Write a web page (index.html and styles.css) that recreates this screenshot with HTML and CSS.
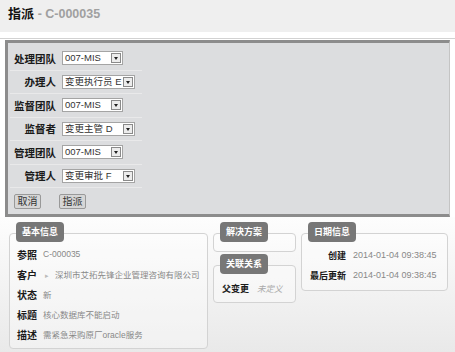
FILE: index.html
```html
<!DOCTYPE html>
<html lang="zh-CN">
<head>
    <meta charset="UTF-8">
    <title>指派 - C-000035</title>
    <link rel="stylesheet" href="styles.css">
</head>
<body>
    <div class="title-bar">
        <h1>指派 <span class="ref">- C-000035</span></h1>
    </div>
    <div class="rule"></div>

    <form class="assign-panel">
        <div class="field">
            <label>处理团队</label>
            <div class="select"><span class="select-text">007-MIS</span><span class="select-btn"></span></div>
        </div>
        <div class="field">
            <label>办理人</label>
            <div class="select wide"><span class="select-text">变更执行员 E</span><span class="select-btn"></span></div>
        </div>
        <div class="field">
            <label>监督团队</label>
            <div class="select"><span class="select-text">007-MIS</span><span class="select-btn"></span></div>
        </div>
        <div class="field">
            <label>监督者</label>
            <div class="select wide"><span class="select-text">变更主管 D</span><span class="select-btn"></span></div>
        </div>
        <div class="field">
            <label>管理团队</label>
            <div class="select"><span class="select-text">007-MIS</span><span class="select-btn"></span></div>
        </div>
        <div class="field">
            <label>管理人</label>
            <div class="select wide"><span class="select-text">变更审批 F</span><span class="select-btn"></span></div>
        </div>
        <div class="actions">
            <button type="button">取消</button>
            <button type="button">指派</button>
        </div>
    </form>

    <div class="details">
        <div class="col col-main">
            <div class="card">
                <div class="card-tab">基本信息</div>
                <div class="card-body info">
                    <div class="row"><span class="key">参照</span><span class="val">C-000035</span></div>
                    <div class="row"><span class="key">客户</span><span class="val"><span class="caret">▸</span>深圳市艾拓先锋企业管理咨询有限公司</span></div>
                    <div class="row"><span class="key">状态</span><span class="val">新</span></div>
                    <div class="row"><span class="key">标题</span><span class="val">核心数据库不能启动</span></div>
                    <div class="row"><span class="key">描述</span><span class="val">需紧急采购原厂oracle服务</span></div>
                </div>
            </div>
        </div>

        <div class="col col-mid">
            <div class="card">
                <div class="card-tab">解决方案</div>
                <div class="card-body empty"></div>
            </div>
            <div class="card">
                <div class="card-tab">关联关系</div>
                <div class="card-body relation">
                    <div class="row"><span class="key small">父变更</span><span class="val undefined">未定义</span></div>
                </div>
            </div>
        </div>

        <div class="col col-date">
            <div class="card">
                <div class="card-tab">日期信息</div>
                <div class="card-body dates">
                    <div class="row"><span class="key small date-key">创建</span><span class="val">2014-01-04 09:38:45</span></div>
                    <div class="row"><span class="key small date-key">最后更新</span><span class="val">2014-01-04 09:38:45</span></div>
                </div>
            </div>
        </div>
    </div>
</body>
</html>
```

FILE: styles.css
```css
* {
    box-sizing: border-box;
    margin: 0;
    padding: 0;
}

body {
    font-family: 'Liberation Sans', 'Noto Sans CJK SC', sans-serif;
    background-color: #fff;
    color: #222;
    width: 455px;
    height: 352px;
    overflow: hidden;
}

.title-bar {
    height: 32px;
    background-color: #efefef;
    padding: 6px 0 0 8px;
}

h1 {
    font-size: 13px;
    font-weight: bold;
    color: #111;
    line-height: 16px;
}

h1 .ref {
    color: #a0a0a0;
    font-size: 12.5px;
}

.rule {
    height: 1px;
    margin-top: 6px;
    background-color: #d2d2d2;
}

.assign-panel {
    margin: 1px 5px 0 5px;
    height: 177px;
    background-color: #dcdddf;
    border: 3px solid #8c8c8c;
    border-right: 1px solid #c4c4c4;
    padding: 4px 0 0 2px;
}

.field {
    display: flex;
    align-items: center;
    width: 132px;
    height: 23.5px;
    border-bottom: 1px solid #e9e9ea;
}

.field label {
    width: 46px;
    text-align: right;
    font-size: 10.5px;
    font-weight: bold;
    color: #1a1a1a;
    margin-right: 6px;
}

.select {
    display: flex;
    align-items: center;
    width: 61px;
    height: 14px;
    background-color: #fff;
    border: 1px solid #a4a4a4;
}

.select.wide {
    width: 73px;
}

.select-text {
    flex: 1;
    font-size: 9.5px;
    color: #333;
    padding-left: 2px;
    white-space: nowrap;
    overflow: hidden;
    line-height: 12px;
}

.select-btn {
    flex: none;
    width: 10px;
    height: 10px;
    margin-right: 1px;
    border: 1px solid #8a8a8a;
    background-color: #ececec;
    position: relative;
}

.select-btn::after {
    content: '';
    position: absolute;
    left: 2px;
    top: 3px;
    border-left: 2.5px solid transparent;
    border-right: 2.5px solid transparent;
    border-top: 3px solid #222;
}

.actions {
    display: flex;
    gap: 18px;
    padding: 6px 0 0 4px;
}

.actions button {
    width: 27px;
    height: 15px;
    font-family: 'Liberation Sans', 'Noto Sans CJK SC', sans-serif;
    font-size: 10px;
    line-height: 12px;
    color: #333;
    background-color: #d6d6d6;
    border: 1px solid #999;
    border-radius: 2px;
}

.details {
    display: flex;
    gap: 5px;
    height: 135px;
    padding: 5px 0 0 9px;
    background: linear-gradient(#fdfdfd, #e9e9e9);
}

.col {
    display: flex;
    flex-direction: column;
}

.col-main {
    width: 199px;
}

.col-mid {
    width: 83px;
    gap: 2px;
}

.col-date {
    width: 147px;
}

.card {
    display: flex;
    flex-direction: column;
}

.card-tab {
    align-self: flex-start;
    position: relative;
    z-index: 1;
    height: 20px;
    margin: 0 0 -9px 7px;
    padding: 0 6px;
    background-color: #777;
    color: #fff;
    font-size: 9px;
    font-weight: bold;
    line-height: 20px;
    border-radius: 4px;
}

.card-body {
    border: 1px solid #d3d3d3;
    border-radius: 4px;
    background-color: rgba(255, 255, 255, 0.35);
}

.card-body .row {
    display: flex;
    align-items: center;
    height: 20px;
    white-space: nowrap;
}

.key {
    font-size: 10px;
    font-weight: bold;
    color: #1a1a1a;
    margin-right: 6px;
}

.key.small {
    font-size: 9px;
}

.val {
    font-size: 8.5px;
    color: #888;
}

.caret {
    color: #bbb;
    font-size: 7px;
    margin: 0 6px 0 2px;
}

.info {
    height: 116px;
    padding: 10px 0 0 7px;
}

.empty {
    height: 19px;
}

.relation {
    height: 38px;
    padding: 12px 0 0 8px;
}

.undefined {
    font-style: italic;
    color: #aaa;
    margin-left: 2px;
}

.dates {
    height: 58px;
    padding: 11px 0 0 4px;
}

.date-key {
    width: 40px;
    text-align: right;
    margin-right: 7px;
}

.dates .val {
    font-size: 9px;
}
```
